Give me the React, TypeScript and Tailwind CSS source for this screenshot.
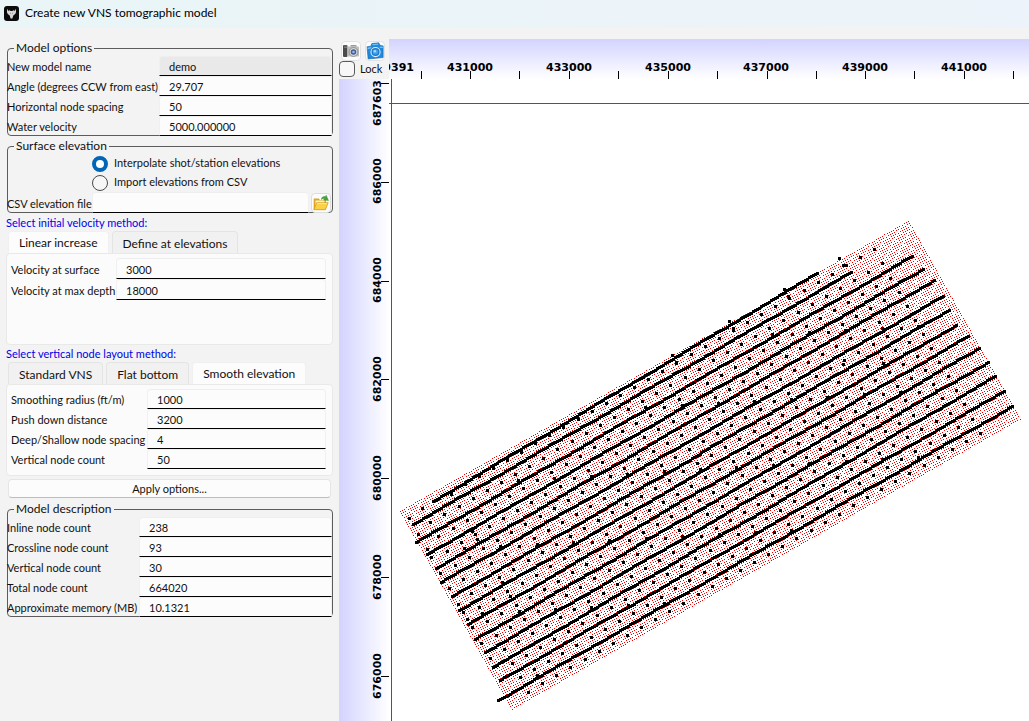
import { useState } from 'react'
import type { ReactNode } from 'react'

type Point = [number, number]

// Survey lines, start and end in map pixels
const shotLines: [number, number, number, number][] = [
  [433, 501, 817, 273],
  [413, 524, 851, 272],
  [416, 542, 912, 256],
  [427, 554, 923, 269],
  [436, 568, 934, 280],
  [441, 582, 943, 296],
  [452, 596, 949, 310],
  [459, 610, 956, 325],
  [468, 624, 968, 336],
  [475, 639, 979, 348],
  [485, 652, 988, 362],
  [493, 667, 995, 376],
  [500, 680, 1004, 391],
  [498, 700, 1012, 406],
]

// Stations that lie off the regular layout
const extraStations: Point[] = [
  [409, 518], [418, 534], [427, 549], [431, 557], [440, 573], [449, 588], [458, 604],
  [463, 612], [467, 619], [472, 627], [481, 643], [490, 658], [839, 258], [843, 265],
  [784, 289], [788, 296], [729, 321], [733, 328], [672, 355], [676, 362], [451, 494],
  [472, 531], [477, 539], [502, 582], [510, 596], [870, 338], [843, 364], [883, 363],
]

const ORIGIN_X = 389
const ORIGIN_Y = 79

const square = (x: number, y: number, size: number) => {
  const half = Math.floor(size / 2)
  const px = Math.round(x) - ORIGIN_X - half
  const py = Math.round(y) - ORIGIN_Y - half
  return `M${px} ${py}h${size}v${size}h-${size}z`
}

const buildNodes = () => {
  const parts: string[] = []
  for (let i = 0; i < 238; i++) {
    for (let j = 0; j < 93; j++) {
      const x = 400 + (i * 508) / 237 + (j * 111.5) / 92
      const y = 511 - (i * 290) / 237 + (j * 197.5) / 92
      parts.push(square(x, y, 1))
    }
  }
  return parts.join('')
}

const buildLines = () => {
  const parts: string[] = []
  shotLines.forEach(([x1, y1, x2, y2], n) => {
    const steps = Math.round((x2 - x1) / 2)
    for (let i = 0; i <= steps; i++) {
      const t = i / steps
      const wobble = Math.sin(i * 0.13 + n * 2) * 0.4
      parts.push(square(x1 + (x2 - x1) * t, y1 + (y2 - y1) * t + wobble, 3))
    }
  })
  return parts.join('')
}

const buildStations = () => {
  const parts = extraStations.map(([x, y]) => square(x, y, 3))
  for (let c = 0; c <= 32; c++) {
    for (let r = -1; r <= 12; r++) {
      const x = 430.3 + c * 14.125 + r * 8.15
      const y = 522.3 - c * 8.09 + r * 14.1
      parts.push(square(x, y, 3))
      // now and then there is an infill point halfway to the next one
      if ((c * 7 + r * 4 + 12) % 9 < 1 && r > -1 && r < 12) {
        parts.push(square(x + 3, y + 6, 3))
      }
    }
  }
  return parts.join('')
}

const nodesPath = buildNodes()
const linesPath = buildLines()
const stationsPath = buildStations()

const eastingTicks = [421, 470, 519, 569, 618, 668, 717, 767, 816, 865, 914, 964, 1013]
const eastingLabels = [
  { x: 391, text: '429391' },
  { x: 470, text: '431000' },
  { x: 569, text: '433000' },
  { x: 668, text: '435000' },
  { x: 766, text: '437000' },
  { x: 865, text: '439000' },
  { x: 964, text: '441000' },
]
const northingTicks = [83, 182, 281, 379, 478, 577, 676]
const northingLabels = [
  { y: 103, text: '687603' },
  { y: 181, text: '686000' },
  { y: 280, text: '684000' },
  { y: 379, text: '682000' },
  { y: 478, text: '680000' },
  { y: 577, text: '678000' },
  { y: 676, text: '676000' },
]

const AppLogo = () => (
  <svg className="w-[15px] h-[15px] shrink-0" viewBox="0 0 15 15">
    <rect width="15" height="15" rx="3" fill="#0b0b0b" />
    <path
      d="M3.800 2.800C2.700 4.300 2.600 6.500 3.800 8l1.900 1.600.9 2.900h1.800l.9-2.900L11.200 8c1.200-1.500 1.100-3.700 0-5.200 0 1.200-.4 2-1.200 2.400L9.300 3.800 8.600 5H6.400l-.7-1.200L5 5.200c-.8-.4-1.200-1.200-1.200-2.400z"
      fill="#d8d8d8"
    />
    <path d="M6 7l.9.600M9 7l-.9.600" stroke="#555" strokeWidth=".6" />
  </svg>
)

const FolderIcon = () => (
  <svg className="w-4 h-4 shrink-0" viewBox="0 0 16 16">
    <path d="M.7 3.500h5l1.300 1.500h6v9.500H.7z" fill="#e0a526" />
    <path d="M2.500 5.500h9v6h-9z" fill="#fff6cf" />
    <path d="M.8 14.700L3.600 7.700h11.600l-2.800 7z" fill="#fcd044" stroke="#d0940f" strokeWidth=".7" />
    <path d="M4.200 8.600h9.600" stroke="#ffe98f" />
    <path d="M8.300 4.500c.3-2.200 2-3.400 3.900-2.800l1-1.400 2.300 5.200-5-.6 1.100-1.300c-1.100-.4-2.100-.1-3.300.9z" fill="#43a83b" stroke="#2d7d2a" strokeWidth=".4" />
  </svg>
)

const GrayCameraIcon = () => (
  <svg className="w-4 h-4 shrink-0" viewBox="0 0 16 16">
    <rect y="2" width="4.500" height="12" rx="1" fill="#4b4b4b" />
    <path d="M1 3h3M1 4.500h3" stroke="#8b8b8b" strokeWidth=".7" />
    <rect x="4.500" y="3.500" width="11.500" height="10" rx="1" fill="#bdbdbd" />
    <path d="M7 3.500L8 2h5l1 1.500z" fill="#999" />
    <circle cx="10.500" cy="9" r="4.400" fill="#dcdcdc" stroke="#808080" strokeWidth=".8" />
    <circle cx="10.500" cy="9" r="2.800" fill="#435e92" />
    <circle cx="10.500" cy="9" r="1.300" fill="#8eb8ee" />
  </svg>
)

const BlueCameraIcon = () => (
  <svg className="w-[18px] h-[18px] shrink-0" viewBox="0 0 17 17">
    <path d="M1 4.500L4.500 4l1-2.500 6.500-.7 1.500 2.500 2.700.4v11L2 16z" fill="#2188dc" stroke="#1467b2" strokeWidth=".6" />
    <path d="M1.500 6l3.500-.5M13 5h3" stroke="#8bd0fa" />
    <path d="M6 2.600l5.500-.6" stroke="#77c4f7" />
    <circle cx="9" cy="9.500" r="4.300" fill="#1b75c6" stroke="#dceefb" strokeWidth="1" />
    <circle cx="9" cy="9.500" r="2.600" fill="#3aa2ee" />
    <circle cx="8.300" cy="8.700" r="1.200" fill="#a5defc" />
  </svg>
)

type FieldProps = {
  id: string
  label: string
  value: string
  cols: string
  readOnly?: boolean
  tall?: boolean
}

const Field = ({ id, label, value, cols, readOnly, tall }: FieldProps) => {
  const [text, setText] = useState(value)
  return (
    <div className={`grid ${cols} ${tall ? 'h-[21px]' : 'h-5'}`}>
      <label htmlFor={id} className="whitespace-nowrap self-end pt-0.5 leading-[18px]">{label}</label>
      <input
        id={id}
        value={text}
        readOnly={readOnly}
        onChange={(e) => setText(e.target.value)}
        className="w-full min-w-0 h-full rounded-t-sm border-t border-x border-t-[#eeeeee] border-x-[#f0f0f0] border-b border-b-black bg-[#fcfcfc] pl-[9px] pt-px outline-none read-only:bg-[#e9e9e9]"
      />
    </div>
  )
}

const Group = ({ title, children }: { title: string; children: ReactNode }) => (
  <fieldset className="ml-px rounded border border-[#5c5c5c]">
    <legend className="ml-1.5 px-0.5 text-[12px] leading-4">{title}</legend>
    <div className="-ml-px -mb-px">{children}</div>
  </fieldset>
)

type TabsProps = { tabs: string[]; active: string; onSelect: (tab: string) => void }

const Tabs = ({ tabs, active, onSelect }: TabsProps) => (
  <div role="tablist" className="ml-0.5 flex h-[22px] gap-[3px]">
    {tabs.map((tab) => (
      <button
        key={tab}
        type="button"
        role="tab"
        aria-selected={tab === active}
        onClick={() => onSelect(tab)}
        className={`px-2.5 text-[12px] leading-5 rounded-t-sm border border-b-0 whitespace-nowrap ${
          tab === active ? 'bg-[#fcfcfc] border-[#f0f0f0]' : 'bg-[#f1f1f1] border-[#e4e4e4] pt-0.5'
        }`}
      >
        {tab}
      </button>
    ))}
  </div>
)

const MapView = () => (
  <svg className="block w-full h-[642px]" shapeRendering="crispEdges">
    <rect width="100%" height="100%" fill="#fff" />
    <path d={nodesPath} fill="#f00000" />
    <path d={linesPath} fill="#000" />
    <path d={stationsPath} fill="#000" />
    <rect x="2" y="0" width="1" height="100%" fill="#555" />
    <rect x="0" y="24" width="100%" height="1" fill="#555" />
  </svg>
)

const App = () => {
  const [source, setSource] = useState('interpolate')
  const [velocityTab, setVelocityTab] = useState('Linear increase')
  const [layoutTab, setLayoutTab] = useState('Smooth elevation')
  const [locked, setLocked] = useState(false)

  const radioClass =
    'appearance-none w-4 h-4 shrink-0 rounded-full border border-[#4a4a4a] bg-[#f7f7f7] checked:border-4 checked:border-[#0067b8] checked:bg-white'

  return (
    <div className="min-h-screen flex flex-col overflow-hidden bg-[#f3f3f3] text-[11px] text-[#111111] font-['Lato','Open_Sans',sans-serif]">
      {/* Title bar */}
      <header className="flex h-7 items-center gap-1.5 bg-gradient-to-r from-[#e9f5f7] to-[#edf3fa] px-1 pb-0.5">
        <AppLogo />
        <h1 className="text-[12px] leading-4 text-black">Create new VNS tomographic model</h1>
      </header>

      <main className="flex flex-1 items-stretch">
        {/* Options */}
        <form className="w-[339px] shrink-0 pt-3 pl-1.5 pr-1.5" onSubmit={(e) => e.preventDefault()}>
          <Group title="Model options">
            <Field id="name" label="New model name" value="demo" cols="grid-cols-[152px_1fr]" readOnly />
            <Field id="angle" label="Angle (degrees CCW from east)" value="29.707" cols="grid-cols-[152px_1fr]" />
            <Field id="spacing" label="Horizontal node spacing" value="50" cols="grid-cols-[152px_1fr]" />
            <Field id="water" label="Water velocity" value="5000.000000" cols="grid-cols-[152px_1fr]" />
          </Group>

          <div className="mt-0.5">
            <Group title="Surface elevation">
              <div className="ml-[85px]">
                <label className="flex h-[19px] items-center gap-1.5">
                  <input type="radio" name="source" className={radioClass} checked={source === 'interpolate'} onChange={() => setSource('interpolate')} />
                  Interpolate shot/station elevations
                </label>
                <label className="flex h-[19px] items-center gap-1.5">
                  <input type="radio" name="source" className={radioClass} checked={source === 'csv'} onChange={() => setSource('csv')} />
                  Import elevations from CSV
                </label>
              </div>
              <div className="flex items-end pr-px">
                <div className="flex-1">
                  <Field id="csv" label="CSV elevation file" value="" cols="grid-cols-[85px_1fr]" tall />
                </div>
                <button type="button" aria-label="Browse" className="ml-0.5 flex w-5 h-5 items-center justify-center rounded border border-[#dddddd] bg-[#fcfcfc]">
                  <FolderIcon />
                </button>
              </div>
            </Group>
          </div>

          <p className="h-[18px] pt-0.5 leading-4 text-[#0000e8]">Select initial velocity method:</p>
          <Tabs tabs={['Linear increase', 'Define at elevations']} active={velocityTab} onSelect={setVelocityTab} />
          <div className="h-[92px] rounded border border-[#e9e9e9] bg-[#fbfbfb] pt-1 pl-1 pr-1.5">
            <Field id="v0" label="Velocity at surface" value="3000" cols="grid-cols-[105px_1fr]" tall />
            <Field id="v1" label="Velocity at max depth" value="18000" cols="grid-cols-[105px_1fr]" tall />
          </div>

          <p className="h-[17px] leading-[17px] text-[#0000e8]">Select vertical node layout method:</p>
          <Tabs tabs={['Standard VNS', 'Flat bottom', 'Smooth elevation']} active={layoutTab} onSelect={setLayoutTab} />
          <div className="h-[92px] rounded border border-[#e9e9e9] bg-[#fbfbfb] pt-1 pl-1 pr-1.5">
            <Field id="radius" label="Smoothing radius (ft/m)" value="1000" cols="grid-cols-[136px_1fr]" />
            <Field id="push" label="Push down distance" value="3200" cols="grid-cols-[136px_1fr]" />
            <Field id="ratio" label="Deep/Shallow node spacing" value="4" cols="grid-cols-[136px_1fr]" />
            <Field id="vcount" label="Vertical node count" value="50" cols="grid-cols-[136px_1fr]" />
          </div>

          <div className="mt-[3px] mb-[3px] px-0.5">
            <button className="block w-full h-[19px] rounded border border-[#e5e5e5] border-b-[#bdbdbd] bg-[#fcfcfc] leading-4">
              Apply options...
            </button>
          </div>

          <Group title="Model description">
            <Field id="inline" label="Inline node count" value="238" cols="grid-cols-[132px_1fr]" />
            <Field id="crossline" label="Crossline node count" value="93" cols="grid-cols-[132px_1fr]" />
            <Field id="vertical" label="Vertical node count" value="30" cols="grid-cols-[132px_1fr]" />
            <Field id="total" label="Total node count" value="664020" cols="grid-cols-[132px_1fr]" />
            <Field id="memory" label="Approximate memory (MB)" value="10.1321" cols="grid-cols-[132px_1fr]" />
          </Group>
        </form>

        {/* Map with rulers */}
        <section className="mt-[11px] grid min-w-0 flex-1 grid-cols-[50px_1fr] grid-rows-[40px_1fr] overflow-hidden">
          <div>
            <div className="flex gap-1 pl-0.5 pt-0.5">
              <button aria-label="Snapshot" className="flex w-5 h-5 items-center justify-center rounded border border-[#e2e2e2] bg-[#fcfcfc]">
                <GrayCameraIcon />
              </button>
              <button aria-label="Save picture" className="flex w-5 h-5 items-center justify-center rounded border border-[#e2e2e2] bg-[#fcfcfc]">
                <BlueCameraIcon />
              </button>
            </div>
            <label className="flex h-4 items-center gap-[5px]">
              <input
                type="checkbox"
                checked={locked}
                onChange={(e) => setLocked(e.target.checked)}
                className="appearance-none w-4 h-4 rounded border border-[#5a5a5a] bg-[#f7f7f7] checked:bg-[#0067b8]"
              />
              Lock
            </label>
          </div>

          <div className="min-w-0 bg-gradient-to-b from-[#d3d3ff] to-white">
            <svg className="block w-full h-10 overflow-hidden font-['DejaVu_Sans',sans-serif] font-bold text-[11px]">
              {eastingTicks.map((x) => (
                <rect key={x} x={x - 389} y="32" width="1" height="8" />
              ))}
              {eastingLabels.map((l) => (
                <text key={l.text} x={l.x - 389} y="32" textAnchor="middle">{l.text}</text>
              ))}
            </svg>
          </div>

          <div className="bg-gradient-to-r from-[#d3d3ff] to-white">
            <svg className="block w-full h-[642px] overflow-hidden font-['DejaVu_Sans',sans-serif] font-bold text-[11px]">
              {northingTicks.map((y) => (
                <rect key={y} x="42" y={y - 79} width="8" height="1" />
              ))}
              {northingLabels.map((l) => (
                <text key={l.text} transform={`translate(42 ${l.y - 79}) rotate(-90)`} textAnchor="middle">{l.text}</text>
              ))}
            </svg>
          </div>

          <div className="min-w-0 bg-white">
            <MapView />
          </div>
        </section>
      </main>
    </div>
  )
}

export default App
